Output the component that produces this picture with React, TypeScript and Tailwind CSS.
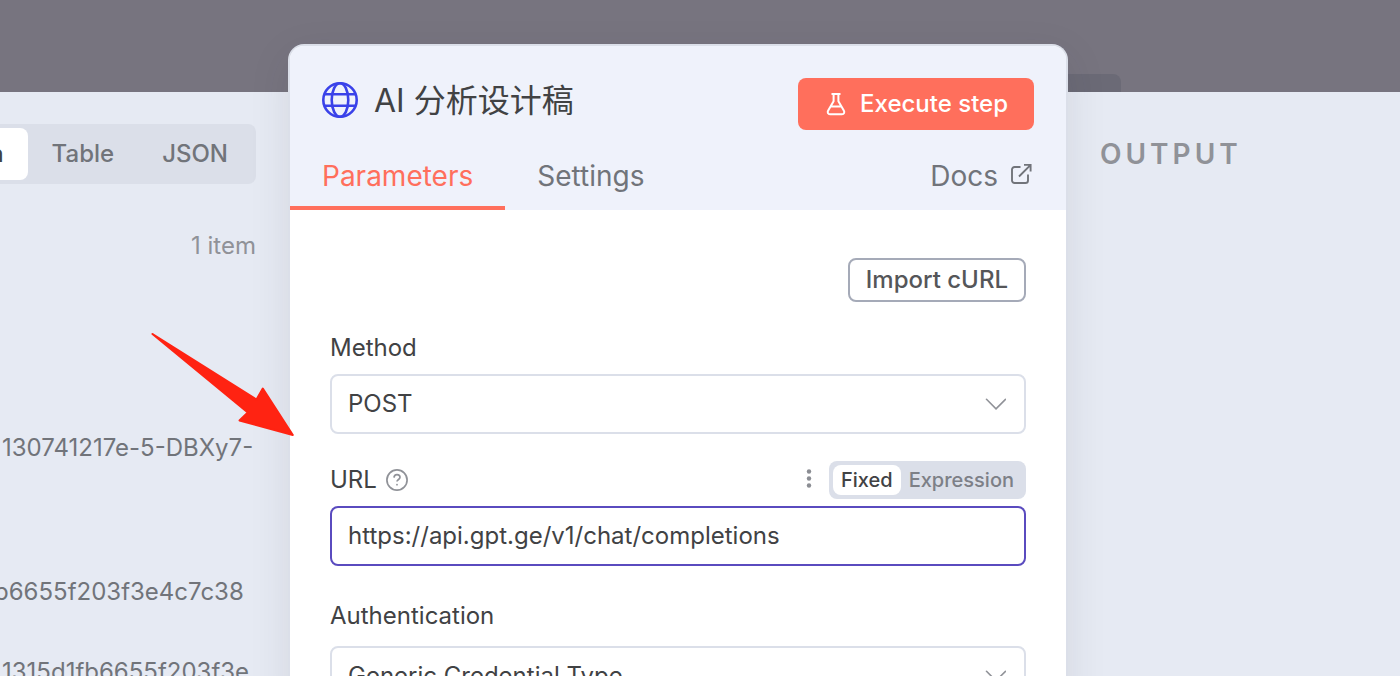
import { useState } from "react";
import clsx from "clsx";

const VIEWS = ["Schema", "Table", "JSON"];
const MODES = ["Fixed", "Expression"];

const GlobeIcon = () => (
  <svg className="h-9 w-9 shrink-0" viewBox="0 0 36 36" fill="none" stroke="#3a42e9" strokeWidth="2.6">
    <circle cx="18" cy="18" r="16.7" />
    <ellipse cx="18" cy="18" rx="8.3" ry="16.7" />
    <path d="M2.2 12.3h31.6M2.2 23.7h31.6" />
  </svg>
);

const FlaskIcon = () => (
  <svg className="h-6 w-6 shrink-0" viewBox="0 0 24 24" fill="none" stroke="currentColor" strokeWidth="2">
    <path d="M7.5 2h9M9.600 2v7.200L4.200 18.600c-1.100 1.900-.2 3.600 1.800 3.600h12c2 0 2.900-1.700 1.800-3.600L14.400 9.200V2M7 14.500h10" />
  </svg>
);

const ExternalIcon = () => (
  <svg className="mb-1 h-6 w-6" viewBox="0 0 24 24" fill="none" stroke="currentColor" strokeWidth="1.9">
    <path d="M10.500 5H4.600A2.600 2.600 0 0 0 2 7.600v10.800A2.600 2.600 0 0 0 4.600 21h10.800a2.600 2.600 0 0 0 2.600-2.600v-5.900" />
    <path d="M14 2.900h6.600v6.600M20.400 3.100 9 14.500" />
  </svg>
);

const HelpIcon = () => (
  <svg className="h-6 w-6" viewBox="0 0 24 24" fill="none" stroke="#909298" strokeWidth="1.7">
    <circle cx="12" cy="12" r="10.1" />
    <path d="M9 9.600c.1-2 1.400-3 3-3s3 1 3 2.700c0 2.100-3 2.200-3 4.300" />
    <circle cx="12" cy="16.700" r=".9" fill="#909298" stroke="none" />
  </svg>
);

const PointerArrow = () => (
  <svg className="pointer-events-none absolute top-[284px] -left-[140px] h-[110px] w-[150px]" viewBox="0 0 150 110">
    <path
      d="M2.500 4 106.500 69.500 112.800 58.500 142.800 105 89.500 90.500 97.800 82.500Z"
      fill="#ff2312"
      stroke="#ff2312"
      strokeWidth="2"
      strokeLinejoin="round"
    />
  </svg>
);

function SelectField({ id, label, options }: { id: string; label: string; options: string[] }) {
  return (
    <>
      <label htmlFor={id} className="block text-2xl leading-7">
        {label}
      </label>
      <div className="relative">
        <select
          id={id}
          className="block h-[60px] w-full appearance-none rounded-lg border-2 border-[#dbdfe9] bg-white px-4 text-2xl outline-none"
        >
          {options.map((o) => (
            <option key={o}>{o}</option>
          ))}
        </select>
        <svg
          className="pointer-events-none absolute top-6 right-5 h-3 w-[22px]"
          viewBox="0 0 22 12"
          fill="none"
          stroke="#909298"
          strokeWidth="1.6"
          strokeLinecap="round"
        >
          <path d="M2.500 1.300 12 10.800l9.500-9.500" />
        </svg>
      </div>
    </>
  );
}

function InputPanel() {
  const [view, setView] = useState("Schema");

  return (
    <aside className="mt-[92px] flex flex-col overflow-hidden bg-[#e6eaf3] pt-8 text-2xl leading-7 text-[#71747a]">
      <div className="mr-8 flex h-[60px] shrink-0 self-end rounded-lg bg-[#dbdfe9] p-1 font-medium">
        {VIEWS.map((v) => (
          <button
            key={v}
            onClick={() => setView(v)}
            className={clsx("rounded-lg px-6", view === v && "bg-white text-[#414244]")}
          >
            {v}
          </button>
        ))}
      </div>
      <p className="mt-12 mr-8 text-right text-[#909298]">1 item</p>
      <div className="mt-[174px] pl-0.5 whitespace-nowrap">
        <p>130741217e-5-DBXy7-</p>
        <p className="-ml-2 pt-[116px]">b6655f203f3e4c7c38</p>
        <p className="pt-[52px]">1315d1fb6655f203f3e</p>
      </div>
    </aside>
  );
}

function NodeSettings() {
  const [mode, setMode] = useState("Fixed");
  const [url, setUrl] = useState("https://api.gpt.ge/v1/chat/completions");

  return (
    <main className="relative z-10 mt-11 rounded-t-2xl border-2 border-b-0 border-[#dbdfe9] bg-white shadow-[0_12px_40px_rgba(50,45,60,0.1)]">
      <header className="rounded-t-[14px] bg-[#eff2fb] pt-8">
        <div className="flex h-[52px] items-center justify-between px-8">
          <div className="flex items-center gap-4 pb-2">
            <GlobeIcon />
            <h1 className="pt-0.5 text-[32px] leading-9">AI 分析设计稿</h1>
          </div>
          <button className="flex h-full items-center gap-3 rounded-lg bg-[#ff6f5c] px-[26px] text-2xl font-medium text-white">
            <FlaskIcon />
            Execute step
          </button>
        </div>
        <nav className="mt-3 flex h-[68px] text-[28px] text-[#71747a]">
          <button className="border-b-4 border-[#ff6f5c] px-8 pt-1 text-[#ff6f5c]">Parameters</button>
          <button className="border-b-4 border-transparent px-8 pt-1">Settings</button>
          <a href="#docs" className="ml-auto flex items-center gap-3 pr-8">
            Docs
            <ExternalIcon />
          </a>
        </nav>
      </header>

      <div className="px-10 pt-12">
        <button className="ml-auto block h-11 rounded-lg border-2 border-[#a5aab8] px-4 text-2xl leading-7 font-medium text-[#555659]">
          Import cURL
        </button>

        <div className="mt-8 flex flex-col gap-3">
          <SelectField id="method" label="Method" options={["POST", "GET", "PUT", "PATCH", "DELETE"]} />
        </div>

        <div className="mt-[27px] mb-[7px] flex h-[38px] items-center">
          <label htmlFor="url" className="mr-2 text-2xl leading-7">
            URL
          </label>
          <HelpIcon />
          <button aria-label="Parameter options" className="mr-4 mb-0.5 ml-auto">
            <svg className="h-5 w-2" viewBox="0 0 8 20" fill="#8b8d93">
              <circle cx="4" cy="2.500" r="2.200" />
              <circle cx="4" cy="9.500" r="2.200" />
              <circle cx="4" cy="16.500" r="2.200" />
            </svg>
          </button>
          <div className="relative flex h-full rounded-lg bg-[#dbdfe9] p-1 text-xl font-medium">
            {MODES.map((m) => (
              <label
                key={m}
                className={clsx(
                  "flex items-center rounded-lg px-2",
                  mode === m ? "bg-white text-[#414244]" : "text-[#7d8087]"
                )}
              >
                <input
                  type="radio"
                  name="mode"
                  className="sr-only"
                  checked={mode === m}
                  onChange={() => setMode(m)}
                />
                {m}
              </label>
            ))}
          </div>
        </div>
        <input
          id="url"
          value={url}
          onChange={(e) => setUrl(e.target.value)}
          className="block h-[60px] w-full rounded-lg border-2 border-[#5a4bbf] px-4 pb-0.5 text-2xl outline-none"
        />

        <div className="mt-9 flex flex-col gap-4">
          <SelectField id="auth" label="Authentication" options={["Generic Credential Type", "None"]} />
        </div>
      </div>
      <PointerArrow />
    </main>
  );
}

function OutputPanel() {
  return (
    <aside className="flex flex-col pt-[74px]">
      <div className="h-[18px] w-[53px] shrink-0 rounded-tr-lg bg-[#6b6a76]" />
      <div className="flex-1 bg-[#e6eaf3] px-8 pt-12">
        <h2 className="text-[28px] leading-7 font-semibold tracking-[4px] text-[#909298]">OUTPUT</h2>
      </div>
    </aside>
  );
}

export default function App() {
  return (
    <div className="grid h-screen grid-cols-[288fr_780fr_332fr] overflow-hidden bg-[#77747f] font-['Inter','Noto_Sans_CJK_SC',sans-serif] text-[#414244]">
      <InputPanel />
      <NodeSettings />
      <OutputPanel />
    </div>
  );
}
